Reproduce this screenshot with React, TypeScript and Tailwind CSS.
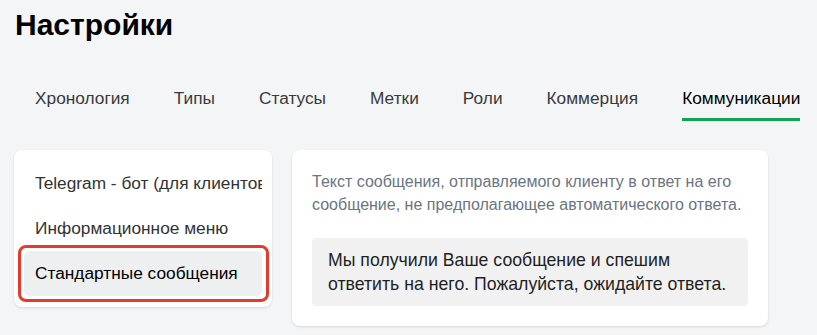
import React, { useState } from "react";

const tabs = [
  "Хронология",
  "Типы",
  "Статусы",
  "Метки",
  "Роли",
  "Коммерция",
  "Коммуникации",
];

const menu = [
  { id: "tg", label: "Telegram - бот (для клиентов)" },
  { id: "info", label: "Информационное меню" },
  { id: "std", label: "Стандартные сообщения" },
];

export default function App() {
  const [activeTab, setActiveTab] = useState("Коммуникации");
  const [activeItem, setActiveItem] = useState("std");

  return (
    <div className="min-h-screen bg-[#f4f5f7] font-['Liberation_Sans',Arial,sans-serif] text-[#1f1f1f]">
      <div className="px-[14px] pt-[10px]">
        {/* Header */}
        <h1 className="pl-px text-[30px] leading-[30px] font-bold text-black">
          Настройки
        </h1>

        {/* Tabs */}
        <div className="flex gap-1 pl-px mt-[46px]">
          {tabs.map((tab) => (
            <button
              key={tab}
              onClick={() => setActiveTab(tab)}
              className="px-5 text-[17.3px] leading-6"
            >
              <span
                className={`block pb-2 border-b-[3px] ${
                  tab === activeTab
                    ? "border-[#13a354] text-black"
                    : "border-transparent text-[#3a3a3a]"
                }`}
              >
                {tab}
              </span>
            </button>
          ))}
        </div>

        {/* Content */}
        <div className="flex items-start gap-5 mt-[29px]">
          {/* Left menu */}
          <div className="w-[258px] shrink-0 bg-white rounded-lg shadow-sm px-[10px] py-[11px]">
            {menu.map((item) => (
              <div key={item.id} className="relative">
                <button
                  onClick={() => setActiveItem(item.id)}
                  className={`w-full h-[45px] pl-[11px] text-left text-[17.3px] whitespace-nowrap overflow-hidden rounded-md ${
                    item.id === activeItem
                      ? "bg-[#eeeff1] text-black"
                      : "text-[#333]"
                  }`}
                >
                  {item.label}
                </button>
                {item.id === activeItem && (
                  <div className="absolute -left-[6px] -top-[6px] -right-[7px] -bottom-[6px] border-[3px] border-[#e33b2e] rounded-lg pointer-events-none" />
                )}
              </div>
            ))}
          </div>

          {/* Right panel */}
          <div className="w-[476px] bg-white rounded-lg shadow-sm p-5">
            <p className="text-[16px] leading-[23px] text-[#6b7481]">
              Текст сообщения, отправляемого клиенту в ответ на его сообщение,
              не предполагающее автоматического ответа.
            </p>
            <div className="mt-[22px] bg-[#f1f1f1] rounded-sm pl-4 pr-2 py-[10px] text-[17.7px] leading-6 text-[#1f1f1f]">
              Мы получили Ваше сообщение и спешим ответить на него. Пожалуйста,
              ожидайте ответа.
            </div>
          </div>
        </div>
      </div>
    </div>
  );
}
